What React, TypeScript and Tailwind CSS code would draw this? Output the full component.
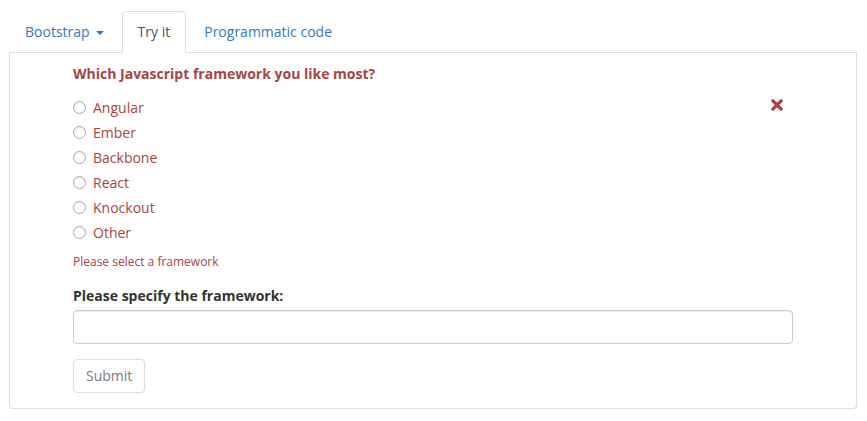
import React from "react";

const options = ["Angular", "Ember", "Backbone", "React", "Knockout", "Other"];

function Tab({ label, active, caret }: { label: string; active?: boolean; caret?: boolean }) {
  return (
    <li className="-mb-px mr-[2px]">
      <a
        className={
          active
            ? "block rounded-t-[4px] border border-[#ddd] border-b-transparent bg-white px-[15px] py-[10px] leading-[20px] text-[#555]"
            : "block rounded-t-[4px] border border-transparent px-[15px] py-[10px] leading-[20px] text-[#337ab7]"
        }
      >
        {label}
        {caret && (
          <span className="ml-[6px] inline-block h-0 w-0 border-x-[4px] border-t-[4px] border-x-transparent border-t-[#337ab7] align-middle" />
        )}
      </a>
    </li>
  );
}

export default function App() {
  return (
    <div
      className="min-h-[421px] bg-white pl-[9px] pr-[10px] pt-[11px] text-[14px] text-[#333]"
      style={{ fontFamily: '"Open Sans", "Liberation Sans", sans-serif' }}
    >
      <ul className="flex border-b border-[#ddd]">
        <Tab label="Bootstrap" caret />
        <Tab label="Try it" active />
        <Tab label="Programmatic code" />
      </ul>

      <div className="rounded-b-[4px] border border-t-0 border-[#ddd] px-[63px] pb-[15px] pt-[11px]">
        <div className="relative">
          <p className="font-bold leading-[20px] text-[#a94442]">Which Javascript framework you like most?</p>
          <svg
            className="absolute right-[10px] top-[35px]"
            width="12"
            height="12"
            viewBox="0 0 12 12"
          >
            <path d="M2 2 L10 10 M10 2 L2 10" stroke="#a94442" strokeWidth="3.2" strokeLinecap="square" />
          </svg>
          <div className="mt-[11px] flex flex-col">
            {options.map((o) => (
              <label key={o} className="flex h-[25px] items-center text-[#a94442]">
                <span className="mr-[7px] inline-block h-[13px] w-[13px] rounded-full border border-[#a8a8a8] bg-white shadow-[inset_0_1px_1px_rgba(0,0,0,0.08)]" />
                <span className="leading-[20px]">{o}</span>
              </label>
            ))}
          </div>
          <p className="mt-[8px] text-[12px] leading-[17px] text-[#a94442]">Please select a framework</p>

          <p className="mt-[16px] font-bold leading-[20px] text-[#333]">Please specify the framework:</p>
          <input
            className="mt-[4px] block h-[34px] w-full rounded-[4px] border border-[#ccc] px-3 shadow-[inset_0_1px_1px_rgba(0,0,0,0.075)] outline-none"
            type="text"
          />
          <button
            className="mt-[15px] h-[34px] rounded-[4px] border border-[#ccc] bg-white px-[12px] leading-[20px] text-[#333] opacity-65"
            disabled
          >
            Submit
          </button>
        </div>
      </div>
    </div>
  );
}
